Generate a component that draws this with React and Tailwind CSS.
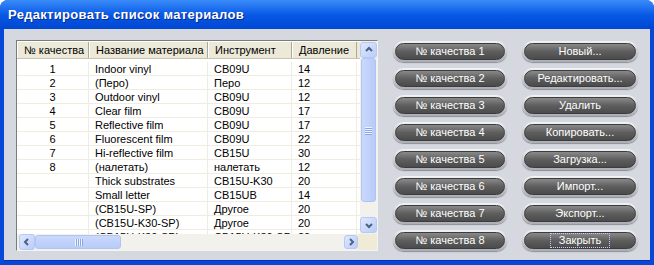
const rows = [
  ['1', 'Indoor vinyl', 'CB09U', '14'],
  ['2', '(Перо)', 'Перо', '12'],
  ['3', 'Outdoor vinyl', 'CB09U', '12'],
  ['4', 'Clear film', 'CB09U', '17'],
  ['5', 'Reflective film', 'CB09U', '17'],
  ['6', 'Fluorescent film', 'CB09U', '22'],
  ['7', 'Hi-reflective film', 'CB15U', '30'],
  ['8', '(налетать)', 'налетать', '12'],
  ['', 'Thick substrates', 'CB15U-K30', '20'],
  ['', 'Small letter', 'CB15UB', '14'],
  ['', '(CB15U-SP)', 'Другое', '20'],
  ['', '(CB15U-K30-SP)', 'Другое', '20'],
  ['', '(CB15U-K30-SP)', 'CB15U-K30-SP', '20'],
];

const leftButtons = [1, 2, 3, 4, 5, 6, 7, 8].map((n) => `№ качества ${n}`);
const rightButtons = ['Новый...', 'Редактировать...', 'Удалить', 'Копировать...', 'Загрузка...', 'Импорт...', 'Экспорт...', 'Закрыть'];

// XP style scroll arrow
function Arrow({ dir, className = '' }) {
  const paths = {
    up: 'M3 7 L6 4 L9 7',
    down: 'M3 5 L6 8 L9 5',
    left: 'M7 3 L4 6 L7 9',
    right: 'M5 3 L8 6 L5 9',
  };
  return (
    <div className={`flex items-center justify-center rounded-[3px] border border-[#b6c8f3] bg-gradient-to-br from-[#dfe8fd] to-[#b9cdfb] ${className}`}>
      <svg width="12" height="12" viewBox="0 0 12 12">
        <path d={paths[dir]} fill="none" stroke="#4d6185" strokeWidth="2" />
      </svg>
    </div>
  );
}

function PillButton({ label, focused }) {
  return (
    <div className="rounded-full p-[2px] bg-gradient-to-b from-[#f2f3f6] to-[#a9acb3] shadow-[0_1px_1px_#8c8f96]">
      <div className="h-[17px] rounded-full border border-[#3c3c3c] bg-gradient-to-b from-[#8a8a8a] via-[#5e5e5e] to-[#4b4b4b] flex items-center justify-center px-2">
        <span className={`text-[11px] leading-[13px] text-white ${focused ? 'outline outline-1 outline-dotted outline-[#c8c8ff] px-[8px]' : ''}`}>
          {label}
        </span>
      </div>
    </div>
  );
}

export default function App() {
  return (
    <div
      className="w-[654px] h-[265px] flex flex-col rounded-t-[8px] bg-[#0848d8] overflow-hidden"
      style={{ fontFamily: '"Liberation Sans", Arial, sans-serif' }}
    >
      {/* title bar */}
      <div className="h-[29px] shrink-0 flex items-center pl-[8px] bg-gradient-to-b from-[#3a8cf9] via-[#0859e6] to-[#0046d2]">
        <span className="text-white font-bold text-[13px] tracking-[0.3px] [text-shadow:1px_1px_0_#0a2a8a]">
          Редактировать список материалов
        </span>
      </div>

      {/* client area */}
      <div className="flex-1 mx-[4px] mb-[4px] bg-[#d5d8df] flex pt-[11px] pl-[12px] border-b border-[#0631a8]">
        {/* list box */}
        <div className="w-[362px] h-[211px] border border-t-[#7c7c7c] border-l-[#7c7c7c] border-r-[#f4f4f4] border-b-[#f4f4f4] bg-white flex flex-col text-[11px] text-black">
          <div className="flex flex-1 min-h-0">
            <div className="flex-1 min-w-0 flex flex-col overflow-hidden">
              {/* header */}
              <div className="flex h-[17px] shrink-0 mt-[1px] bg-[#ece9d8] border-b border-[#c8c4b0]">
                {[
                  ['№ качества', 'w-[72px] pl-[6px]'],
                  ['Название материала', 'w-[119px] pl-[6px]'],
                  ['Инструмент', 'w-[84px] pl-[6px]'],
                  ['Давление', 'w-[65px] pl-[6px]'],
                ].map(([t, c]) => (
                  <div key={t} className={`${c} shrink-0 flex items-center whitespace-nowrap overflow-hidden border-r border-[#aca899] border-l border-l-white`}>
                    {t}
                  </div>
                ))}
              </div>
              {/* rows */}
              <div className="flex-1 overflow-hidden pt-[3px]">
                {rows.map((r, i) => (
                  <div key={i} className="flex h-[14px] border-b border-[#efece0]">
                    <div className="w-[72px] shrink-0 text-center leading-[15px] border-r border-[#efece0]">{r[0]}</div>
                    <div className="w-[119px] shrink-0 pl-[6px] leading-[15px] whitespace-nowrap overflow-hidden border-r border-[#efece0]">{r[1]}</div>
                    <div className="w-[84px] shrink-0 pl-[6px] leading-[15px] whitespace-nowrap overflow-hidden border-r border-[#efece0]">{r[2]}</div>
                    <div className="w-[65px] shrink-0 pl-[6px] leading-[15px] border-r border-[#efece0]">{r[3]}</div>
                  </div>
                ))}
              </div>
            </div>
            {/* vertical scrollbar */}
            <div className="w-[17px] shrink-0 bg-[#f3f1ec] flex flex-col">
              <Arrow dir="up" className="h-[16px] mt-[1px]" />
              <div className="h-[144px] mx-[1px] rounded-[3px] border border-[#b1c3ef] bg-gradient-to-r from-[#c9d8fc] to-[#b8cbf9] flex items-center justify-center">
                <div className="flex flex-col gap-[1px]">
                  {[0, 1, 2, 3].map((k) => (
                    <div key={k} className="w-[7px] h-[1px] bg-[#eef3fe] shadow-[0_1px_0_#8ca6e4]" />
                  ))}
                </div>
              </div>
              <div className="flex-1" />
              <Arrow dir="down" className="h-[16px] mb-[1px]" />
            </div>
          </div>
          {/* horizontal scrollbar */}
          <div className="h-[16px] shrink-0 flex bg-[#f3f1ec]">
            <div className="flex-1 flex pl-[2px]">
              <Arrow dir="left" className="w-[16px]" />
              <div className="w-[86px] my-[1px] rounded-[3px] border border-[#b1c3ef] bg-gradient-to-b from-[#c9d8fc] to-[#b8cbf9] flex items-center justify-center">
                <div className="flex gap-[1px]">
                  {[0, 1, 2, 3].map((k) => (
                    <div key={k} className="w-[1px] h-[7px] bg-[#eef3fe] shadow-[1px_0_0_#8ca6e4]" />
                  ))}
                </div>
              </div>
              <div className="flex-1" />
              <Arrow dir="right" className="w-[14px] my-[1px]" />
            </div>
            <div className="w-[19px] shrink-0 bg-[#efebd6]" />
          </div>
        </div>

        {/* buttons */}
        <div className="flex gap-[15px] ml-[15px] pt-[1px]">
          <div className="w-[114px] flex flex-col gap-[6px]">
            {leftButtons.map((b) => (
              <PillButton key={b} label={b} />
            ))}
          </div>
          <div className="w-[116px] flex flex-col gap-[6px]">
            {rightButtons.map((b) => (
              <PillButton key={b} label={b} focused={b === 'Закрыть'} />
            ))}
          </div>
        </div>
      </div>
    </div>
  );
}
